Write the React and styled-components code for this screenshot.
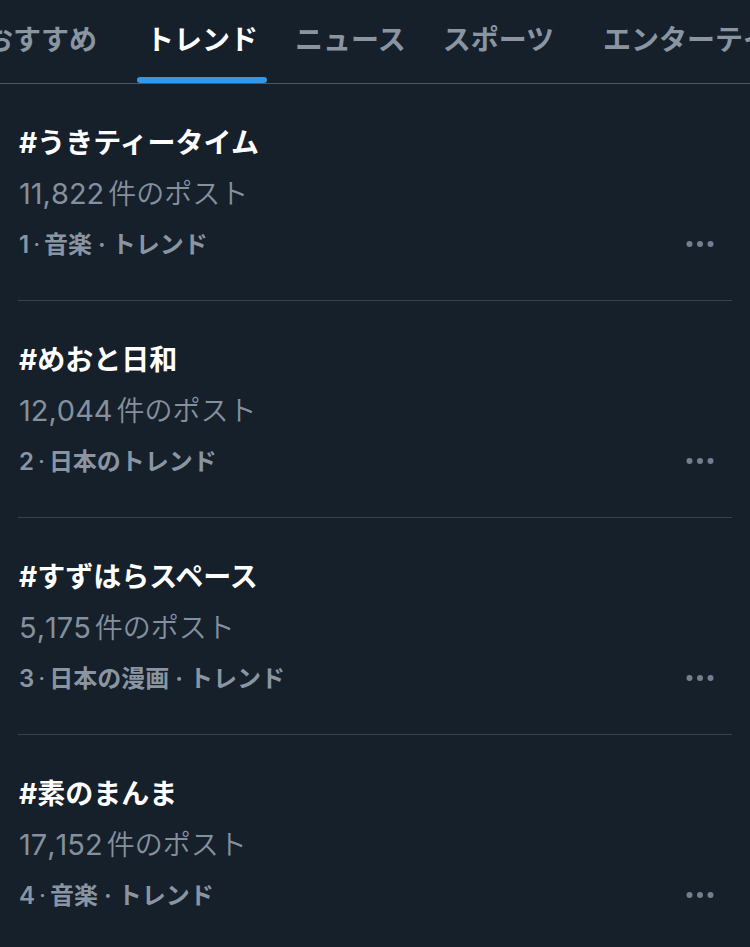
import React from "react";
import styled, { createGlobalStyle } from "styled-components";

const Global = createGlobalStyle`
  *, *::before, *::after { box-sizing: border-box; }
  body {
    margin: 0;
    background: #16202b;
    color: #ffffff;
    font-family: Inter, "Noto Sans CJK JP", sans-serif;
    overflow-x: hidden;
  }
`;

const Tabs = styled.nav`
  display: flex;
  overflow: hidden;
  border-bottom: 1px solid #4b5865;
`;

const TabList = styled.div`
  display: flex;
  flex: none;
  gap: 19px;
  margin-left: -36px;
`;

const Tab = styled.a`
  flex: none;
  padding: 3px ${(p) => (p.$wide ? "21px" : "9px")} 0;
  color: ${(p) => (p.$active ? "#ffffff" : "#8a95a2")};
  font-size: 28px;
  font-weight: 700;
  line-height: 74px;
  text-decoration: none;
  white-space: nowrap;

  &::after {
    content: "";
    display: block;
    height: 6px;
    margin: 0 ${(p) => (p.$wide ? "-12px" : "-9px")};
    border-radius: 3px;
    background: ${(p) => (p.$active ? "#3398e5" : "transparent")};
  }
`;

const List = styled.main`
  padding: 0 18px;
`;

const Trend = styled.article`
  padding: 37px 0 33px 1px;
  border-bottom: 1px solid #36434f;
  &:last-child { border-bottom: 0; }
`;

const Title = styled.h2`
  margin: 0;
  font-size: 28px;
  font-weight: 700;
  line-height: 44px;
`;

const Count = styled.p`
  display: flex;
  align-items: baseline;
  gap: 4px;
  margin: 0;
  padding: 5px 0;
  color: #84909d;
  font-size: 28px;
  font-weight: 350;
  line-height: 48px;
`;

const Digits = styled.span`
  font-size: 29px;
  font-weight: 400;
  font-kerning: none;
`;

const Footer = styled.div`
  display: flex;
  align-items: center;
  justify-content: space-between;
  padding-right: 18px;
`;

const Meta = styled.div`
  display: flex;
  gap: 4px;
  color: #8a95a2;
  font-size: 24px;
  font-weight: 600;
  line-height: 44px;
`;

const Dot = styled.span`
  font-weight: 400;
`;

const More = styled.button`
  display: flex;
  padding: 0 0 2px;
  border: 0;
  background: none;
  color: #71808f;
  cursor: pointer;
`;

const tabs = [
  { label: "おすすめ", wide: true },
  { label: "トレンド", active: true },
  { label: "ニュース" },
  { label: "スポーツ" },
  { label: "エンターテイメント", wide: true },
];

const trends = [
  { title: "#うきティータイム", count: "11,822", topic: "音楽 · トレンド" },
  { title: "#めおと日和", count: "12,044", topic: "日本のトレンド" },
  { title: "#すずはらスペース", count: "5,175", topic: "日本の漫画 · トレンド" },
  { title: "#素のまんま", count: "17,152", topic: "音楽 · トレンド" },
];

export default function App() {
  return (
    <>
      <Global />
      <Tabs aria-label="カテゴリー">
        <TabList>
          {tabs.map((t) => (
            <Tab
              key={t.label}
              href="#"
              $active={t.active}
              $wide={t.wide}
              aria-current={t.active ? "page" : undefined}
            >
              {t.label}
            </Tab>
          ))}
        </TabList>
      </Tabs>
      <List>
        {trends.map((t, i) => (
          <Trend key={t.title}>
            <Title>{t.title}</Title>
            <Count>
              <Digits>{t.count}</Digits>
              <span>件のポスト</span>
            </Count>
            <Footer>
              <Meta>
                <span>{i + 1}</span>
                <Dot>·</Dot>
                <span>{t.topic}</span>
              </Meta>
              <More type="button" aria-label="もっと見る">
                <svg width="28" height="8" viewBox="0 0 28 8" fill="currentColor">
                  <circle cx="3.5" cy="4" r="3" />
                  <circle cx="14" cy="4" r="3" />
                  <circle cx="24.5" cy="4" r="3" />
                </svg>
              </More>
            </Footer>
          </Trend>
        ))}
      </List>
    </>
  );
}
